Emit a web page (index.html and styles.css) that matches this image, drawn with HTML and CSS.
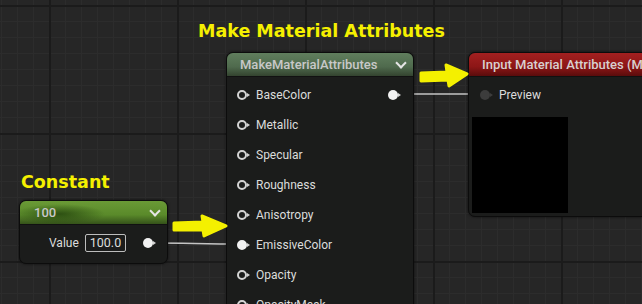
FILE: index.html
```html
<!DOCTYPE html>
<html lang="en">
<head>
  <meta charset="UTF-8">
  <title>Material Graph</title>
  <link rel="stylesheet" href="styles.css">
</head>
<body>

<div class="canvas">
  <!-- wires sit under the nodes -->
  <svg class="wires" width="642" height="304">
    <line x1="398" y1="94" x2="482" y2="94" />
    <path d="M152 243 C190 243 200 244 244 244" />
  </svg>

  <div class="note note-make">Make Material Attributes</div>
  <div class="note note-const">Constant</div>

  <div class="node node-make">
    <div class="node-head head-green">
      <span class="title">MakeMaterialAttributes</span>
      <span class="chev"></span>
    </div>
    <div class="node-body">
      <div class="row">
        <span class="pin-in"></span><span class="label">BaseColor</span>
        <span class="pin-out"></span>
      </div>
      <div class="row"><span class="pin-in"></span><span class="label">Metallic</span></div>
      <div class="row"><span class="pin-in"></span><span class="label">Specular</span></div>
      <div class="row"><span class="pin-in"></span><span class="label">Roughness</span></div>
      <div class="row"><span class="pin-in"></span><span class="label">Anisotropy</span></div>
      <div class="row"><span class="pin-in filled"></span><span class="label">EmissiveColor</span></div>
      <div class="row"><span class="pin-in"></span><span class="label">Opacity</span></div>
      <div class="row"><span class="pin-in"></span><span class="label">OpacityMask</span></div>
    </div>
  </div>

  <div class="node node-input">
    <div class="node-head head-red">
      <span class="title">Input Material Attributes (MaterialAttributes)</span>
    </div>
    <div class="node-body">
      <div class="row"><span class="pin-dark"></span><span class="label">Preview</span></div>
      <div class="preview"></div>
    </div>
  </div>

  <div class="node node-const">
    <div class="node-head head-lime">
      <span class="title">100</span>
      <span class="chev"></span>
    </div>
    <div class="node-body">
      <div class="row row-value">
        <span class="label">Value</span>
        <span class="value-box">100.0</span>
        <span class="pin-out"></span>
      </div>
    </div>
  </div>

  <!-- hand drawn annotation arrows -->
  <svg class="arrows" width="642" height="304">
    <path d="M421 73 L447 72 L446 65 L467 74 L449 86 L448 80 L421 81 Z" />
    <path d="M174 223 L203 222 L202 216 L226 226 L204 236 L203 230 L174 230 Z" />
  </svg>
</div>

</body>
</html>
```

FILE: styles.css
```css
body {
  margin: 0;
  background-color: #262626;
  font-family: Roboto, "Liberation Sans", sans-serif;
}
.canvas {
  position: relative;
  width: 642px;
  height: 304px;
  overflow: hidden;
  background-color: #262626;
  background-image:
    linear-gradient(to right, #1b1b1b 2px, transparent 2px),
    linear-gradient(to bottom, #1b1b1b 2px, transparent 2px),
    linear-gradient(to right, #2c2c2c 1px, transparent 1px),
    linear-gradient(to bottom, #2c2c2c 1px, transparent 1px);
  background-size: 128px 128px, 128px 128px, 16px 16px, 16px 16px;
  background-position: 49px 0, 0 5px, 49px 0, 0 5px;
}
.wires, .arrows {
  position: absolute;
  left: 0;
  top: 0;
}
.wires line, .wires path {
  stroke: #c4c4c4;
  stroke-width: 1.5;
  fill: none;
}
.arrows {
  z-index: 5;
}
.arrows path {
  fill: #f4f000;
  stroke: #f4f000;
  stroke-width: 3;
  stroke-linejoin: round;
}
.note {
  position: absolute;
  color: #f5f000;
  font-family: "DejaVu Sans", sans-serif;
  font-weight: bold;
  font-size: 17.5px;
  line-height: 20px;
  white-space: nowrap;
}
.note-make {
  left: 198px;
  top: 21px;
}
.note-const {
  left: 21px;
  top: 172px;
}

/* nodes */
.node {
  position: absolute;
  background-color: #1b1c1b;
  border: 1px solid #0c0c0c;
  border-radius: 7px;
  box-shadow: 0 0 3px rgba(0, 0, 0, 0.6);
  overflow: hidden;
  color: #dcdcdc;
  font-size: 12px;
}
.node-make {
  left: 226px;
  top: 52px;
  width: 186px;
  height: 280px;
}
.node-input {
  left: 468px;
  top: 52px;
  width: 200px;
  height: 163px;
}
.node-const {
  left: 19px;
  top: 200px;
  width: 147px;
  height: 62px;
}
.node-head {
  display: flex;
  align-items: center;
  justify-content: space-between;
  height: 23px;
  padding: 0 8px 0 13px;
  border-bottom: 1px solid #111;
  white-space: nowrap;
}
.node-head .title {
  color: #c8c8c8;
  font-weight: 500;
  font-size: 13px;
}
.head-green {
  background: linear-gradient(to bottom, #607e5d 0%, #4f6a4d 60%, #33432f 100%);
}
.head-red {
  background: linear-gradient(to bottom, #a32020 0%, #8d1616 60%, #5a0c0c 100%);
}
.head-red .title {
  color: #d8d0d0;
}
.head-lime {
  padding-left: 14px;
  background:
    radial-gradient(ellipse 45px 10px at 40px 13px, rgba(30, 60, 10, 0.75), transparent),
    linear-gradient(to bottom, #6a9a36 0%, #5a8a2a 60%, #35521a 100%);
}
.chev {
  width: 6px;
  height: 6px;
  border-right: 2px solid #e6e6e6;
  border-bottom: 2px solid #e6e6e6;
  transform: rotate(45deg);
  margin-top: -4px;
}
.node-body {
  padding-top: 3px;
}
.row {
  position: relative;
  display: flex;
  align-items: center;
  height: 30px;
  padding-left: 10px;
}
.label {
  margin-left: 9px;
}

/* pins */
.pin-in, .pin-out, .pin-dark {
  position: relative;
  box-sizing: border-box;
  width: 10px;
  height: 10px;
  border-radius: 50%;
}
.pin-in {
  border: 2px solid #d4d4d4;
}
.pin-in.filled {
  background-color: #f2f2f2;
  border-color: #f2f2f2;
}
.pin-out {
  background-color: #f2f2f2;
}
.pin-dark {
  background-color: #3c3c3c;
  margin-left: 1px;
}
.pin-in::after, .pin-out::after, .pin-dark::after {
  content: "";
  position: absolute;
  top: 3px;
  right: -3px;
  border-left: 3px solid #d4d4d4;
  border-top: 2px solid transparent;
  border-bottom: 2px solid transparent;
}
.pin-in::after {
  top: 1px;
  right: -5px;
}
.pin-dark::after {
  border-left-color: #3c3c3c;
}
.row .pin-out {
  position: absolute;
  right: 15px;
  top: 10px;
}
.preview {
  width: 96px;
  height: 96px;
  margin: 7px 0 0 3px;
  background-color: #000;
}
.row-value {
  padding-left: 20px;
}
.value-box {
  margin-left: 6px;
  padding: 0 4px;
  height: 16px;
  line-height: 16px;
  border: 1px solid #bdbdbd;
  border-radius: 2px;
  font-size: 12.5px;
}
.row-value .pin-out {
  right: 14px;
}
```
